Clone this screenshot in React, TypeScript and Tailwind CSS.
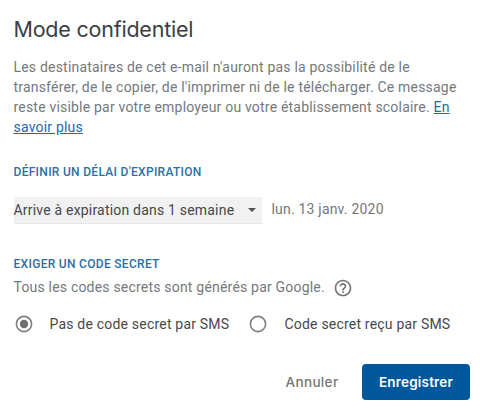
import type { ReactNode } from "react";

function SectionTitle({ children }: { children: ReactNode }) {
  return (
    <h2 className="text-[12px] leading-4 font-medium tracking-[0.3px] whitespace-nowrap text-[#2a70a8]">
      {children}
    </h2>
  );
}

function Radio({ checked = false }: { checked?: boolean }) {
  return (
    <svg className="size-5 shrink-0" viewBox="0 0 20 20" fill="none">
      <circle cx="10" cy="10" r="7.6" stroke="#808080" strokeWidth="1.6" />
      {checked && <circle cx="10" cy="10" r="4.2" fill="#707070" />}
    </svg>
  );
}

export default function App() {
  return (
    <main className="h-[418px] w-[480px] overflow-hidden bg-white pt-[14px] pl-[13.5px] font-[Roboto,sans-serif] text-[14px] leading-5 tracking-[0.2px] text-[#75787c]">
      <h1 className="h-[31px] w-max font-[Inter,sans-serif] text-[21.5px] leading-[30px] tracking-[-0.22px] text-[#3c3e41]">
        Mode confidentiel
      </h1>

      <p className="mt-3 whitespace-nowrap">
        Les destinataires de cet e-mail n'auront pas la possibilité de le
        <br />
        transférer, de le copier, de l'imprimer ni de le télécharger. Ce message
        <br />
        reste visible par votre employeur ou votre établissement scolaire.{" "}
        <a className="text-[#2766b0] underline">En</a>
        <br />
        <a className="text-[#2766b0] underline">savoir plus</a>
      </p>

      <section className="mt-[27px]">
        <SectionTitle>DÉFINIR UN DÉLAI D'EXPIRATION</SectionTitle>
        <div className="mt-[17px] flex items-start">
          <div className="flex h-[27px] w-[248.5px] items-center justify-between border-b border-[#e6e6e6] bg-[#f1f1f1] pr-[6px] text-[#46484b]">
            <span className="whitespace-nowrap">Arrive à expiration dans 1 semaine</span>
            <svg className="h-1 w-2" viewBox="0 0 8 4" fill="#505050">
              <path d="M0 0h8L4 4z" />
            </svg>
          </div>
          <span className="ml-[9.5px] pt-[2px]">lun. 13 janv. 2020</span>
        </div>
      </section>

      <section className="mt-[32px]">
        <SectionTitle>EXIGER UN CODE SECRET</SectionTitle>
        <div className="mt-[5px] flex h-5 items-center">
          <span>Tous les codes secrets sont générés par Google.</span>
          <svg className="mt-[2px] ml-[8.5px] size-5" viewBox="0 0 24 24" fill="#757575">
            <path d="M11 18h2v-2h-2v2zm1-16C6.48 2 2 6.48 2 12s4.48 10 10 10 10-4.48 10-10S17.52 2 12 2zm0 18c-4.41 0-8-3.59-8-8s3.59-8 8-8 8 3.59 8 8-3.59 8-8 8zm0-14c-2.21 0-4 1.79-4 4h2c0-1.1.9-2 2-2s2 .9 2 2c0 2-3 1.75-3 5h2c0-2.25 3-2.5 3-5 0-2.21-1.79-4-4-4z" />
          </svg>
        </div>
        <div className="mt-[17px] flex h-5 items-center pl-[0.5px] text-[#46484b]">
          <label className="flex w-[234px] items-center gap-[15.5px]">
            <Radio checked />
            <span className="whitespace-nowrap">Pas de code secret par SMS</span>
          </label>
          <label className="flex items-center gap-[16.5px]">
            <Radio />
            <span className="whitespace-nowrap">Code secret reçu par SMS</span>
          </label>
        </div>
      </section>

      <div className="mt-[30px] flex justify-end pr-[10px] font-[Inter,sans-serif]">
        <button className="h-9 w-[100px] text-[13.5px] font-medium tracking-[0.35px] text-[#747678]">
          Annuler
        </button>
        <button className="h-9 w-[108px] rounded bg-[#01579b] text-[13.5px] font-semibold tracking-[0.2px] text-white">
          Enregistrer
        </button>
      </div>
    </main>
  );
}
